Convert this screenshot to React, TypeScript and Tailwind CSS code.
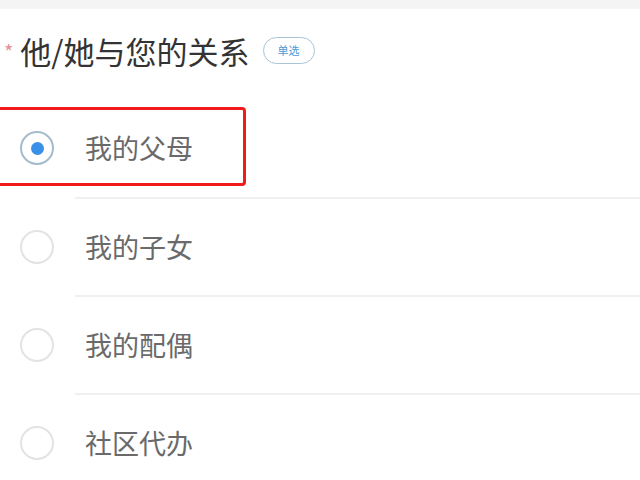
import React from "react";

const options = ["我的父母", "我的子女", "我的配偶", "社区代办"];

function Radio({ checked }: { checked: boolean }) {
  return checked ? (
    <div className="w-[34px] h-[34px] rounded-full border-[2px] border-[#a3bccb] flex items-center justify-center shrink-0">
      <div className="w-[13px] h-[13px] rounded-full bg-[#3a8fe8]" />
    </div>
  ) : (
    <div className="w-[34px] h-[34px] rounded-full border-[2px] border-[#e3e3e3] shrink-0" />
  );
}

export default function App() {
  return (
    <div
      className="w-[640px] h-[480px] overflow-hidden bg-white flex flex-col"
      style={{ fontFamily: '"Noto Sans CJK SC", "Noto Sans", sans-serif' }}
    >
      <div className="h-[9px] bg-[#f4f4f4] shrink-0" />
      <div className="flex-1 flex flex-col bg-white">
        <div className="h-[90px] shrink-0 flex items-start pt-[24px] pl-[4px]">
          <span className="text-[20px] leading-[20px] text-[#e58f9b] mt-[9px] mr-[7px]">*</span>
          <span className="text-[31px] leading-[36px] text-[#333333]">他/她与您的关系</span>
          <span className="ml-[13px] mt-[4px] w-[52px] h-[27px] rounded-full border-[1.5px] border-[#a9c5d4] flex items-center justify-center text-[11px] leading-none text-[#4b9ad6]">
            单选
          </span>
        </div>
        {options.map((o, i) => (
          <div key={o} className="flex flex-col shrink-0">
            {i > 0 && <div className="ml-[75px] h-[2px] bg-[#f0f0f0]" />}
            <div className={`relative flex items-center pl-[20px] ${i > 0 ? "h-[96px]" : "h-[98px]"}`}>
              <Radio checked={i === 0} />
              <span className="ml-[31px] text-[27px] leading-[32px] text-[#6a6a6a]">{o}</span>
              {i === 0 && (
                <div className="absolute left-[-10px] top-[8px] w-[256px] h-[79px] border-[3px] border-[#f21b1b] rounded-[4px] pointer-events-none" />
              )}
            </div>
          </div>
        ))}
      </div>
    </div>
  );
}
